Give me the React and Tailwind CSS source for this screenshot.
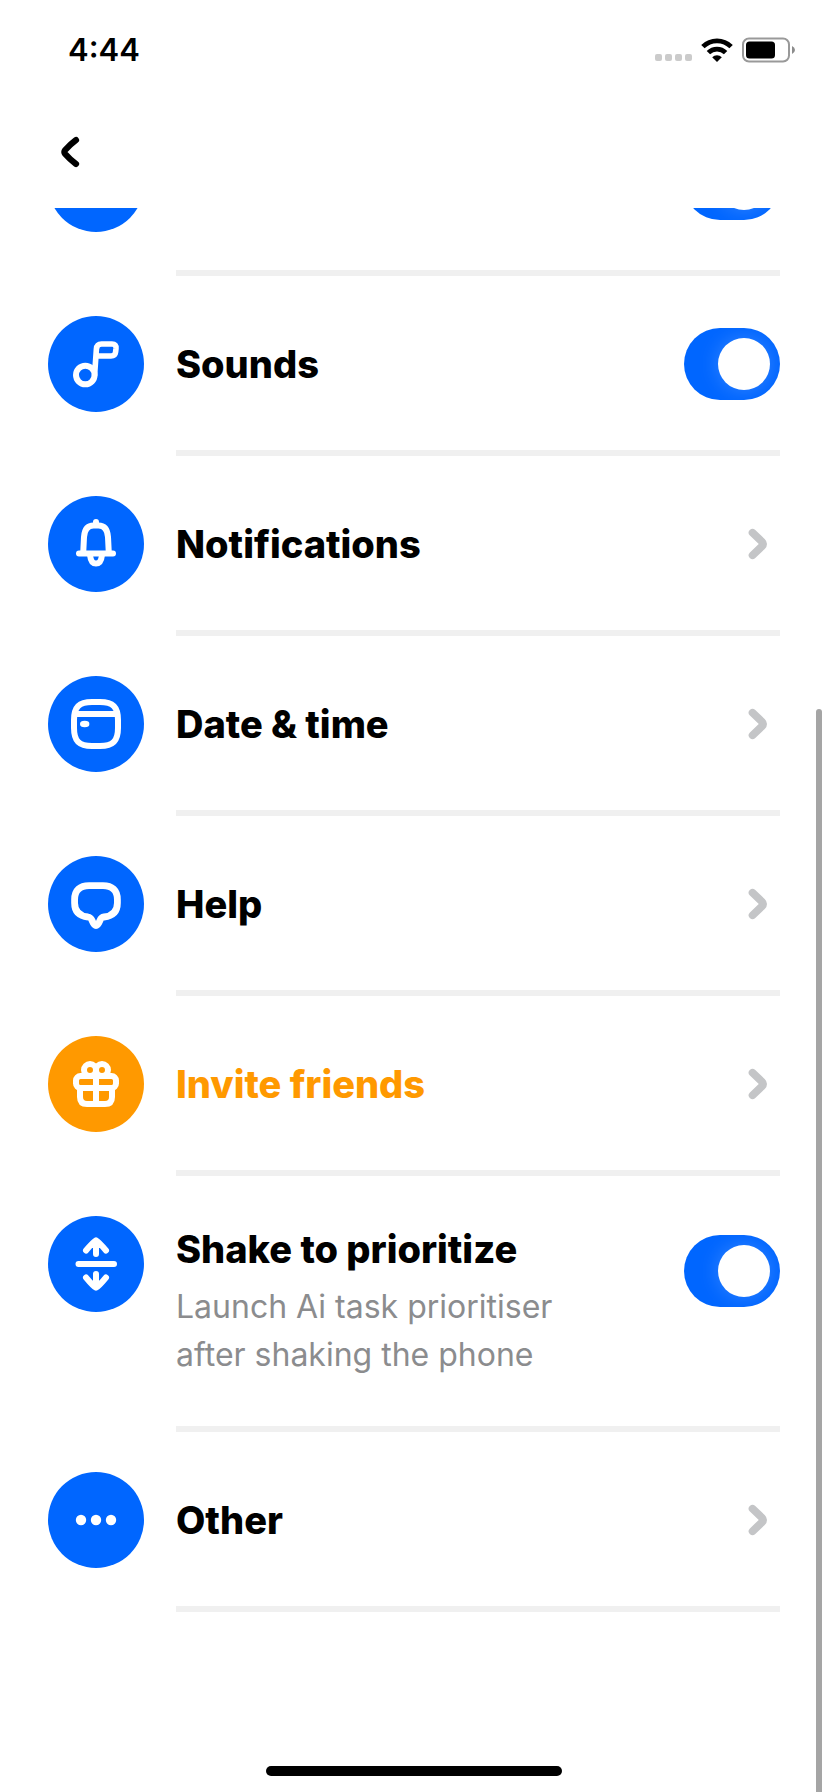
import { useState } from "react";

const Glyph = ({ children }) => (
    <svg viewBox="0 0 96 96" className="size-24" fill="none" stroke="white" strokeWidth="6" strokeLinecap="round" strokeLinejoin="round" aria-hidden="true">
        {children}
    </svg>
);

const icons = {
    music: (
        <Glyph>
            <circle cx="37.3" cy="59" r="9.3" />
            <path d="M46.6 59L48.4 33Q48.8 28 53.5 28H64Q68.4 28 68 32.5L67.6 36Q67.2 40 63 40H49" strokeWidth="5.6" />
        </Glyph>
    ),
    bell: (
        <Glyph>
            <path d="M48 26V29M31 57.6H65" />
            <path d="M35.2 57L36 41C36.6 33 40 29.6 45.5 29.6H50.5C56 29.6 59.4 33 60 41L60.8 57" />
            <path d="M42 59C42.6 65 44.6 67.6 48 67.6S53.4 65 54 59" />
        </Glyph>
    ),
    calendar: (
        <Glyph>
            <path d="M26 44C26 31 31 26 44 26H52C65 26 70 31 70 44V52C70 65 65 70 52 70H44C31 70 26 65 26 52Z" />
            <path d="M28 38H68" />
            <ellipse cx="36.7" cy="48" rx="4.7" ry="3.3" fill="white" stroke="none" />
        </Glyph>
    ),
    chat: (
        <Glyph>
            <path strokeWidth="6.8" d="M40 61C31 60 26.6 55 26.6 47V43.5C26.6 34 32 29.6 41 29.6H55C64 29.6 69.4 34 69.4 43.5V47C69.4 55 65 60 56 61C53.6 61.3 53 62 52 64.4C50.6 67.8 49.6 69.6 48 69.6S45.4 67.8 44 64.4C43 62 42.4 61.3 40 61Z" />
        </Glyph>
    ),
    gift: (
        <Glyph>
            <rect x="28" y="40" width="40" height="12" rx="4.5" />
            <path d="M32 52V61Q32 68 39 68H57Q64 68 64 61V52M48 40V68" />
            <circle cx="42" cy="34" r="6" />
            <circle cx="54" cy="34" r="6" />
        </Glyph>
    ),
    shake: (
        <Glyph>
            <path d="M30.5 48H66M48 26V38M38 34.5Q45 26 48 24.3Q51 26 58 34.5M48 58V70M38 61.5Q45 70 48 71.7Q51 70 58 61.5" />
        </Glyph>
    ),
    dots: (
        <Glyph>
            <g fill="white" stroke="none">
                <circle cx="33" cy="48" r="5.2" />
                <circle cx="48" cy="48" r="5.2" />
                <circle cx="63" cy="48" r="5.2" />
            </g>
        </Glyph>
    ),
};

const StatusBar = () => (
    <header className="flex h-[100px] items-center justify-between pl-[68px] pr-8">
        <time className="text-[31px] leading-10 font-semibold">4:44</time>
        <div className="flex items-center gap-[9px]">
            <div className="flex gap-[3px] pt-3.5">
                <i className="size-[7px] rounded-[2px] bg-[#cbcbcb]" />
                <i className="size-[7px] rounded-[2px] bg-[#cbcbcb]" />
                <i className="size-[7px] rounded-[2px] bg-[#cbcbcb]" />
                <i className="size-[7px] rounded-[2px] bg-[#cbcbcb]" />
            </div>
            <svg viewBox="0 0 32 24" className="h-6 w-8" aria-label="Wi-Fi">
                <g fill="none" stroke="black" strokeWidth="4.8">
                    <path d="M1.9 8.6A20 20 0 0 1 30.1 8.6" />
                    <path d="M7.4 14.6A12.2 12.2 0 0 1 24.6 14.6" />
                </g>
                <path d="M16 24L11.2 19.2A6.8 6.8 0 0 1 20.8 19.2Z" />
            </svg>
            <svg viewBox="0 0 54 26" className="h-[26px] w-[54px]" aria-label="Battery">
                <rect x="1" y="1.5" width="46" height="23" rx="6" fill="none" stroke="#999" strokeWidth="2" />
                <rect x="4" y="4.5" width="29" height="17" rx="3.5" />
                <path d="M50 9Q53 10.5 53 13T50 17Z" fill="#8c8c8c" />
            </svg>
        </div>
    </header>
);

const Switch = ({ label }) => {
    const [on, setOn] = useState(true);
    return (
        <input
            type="checkbox"
            role="switch"
            aria-label={label}
            checked={on}
            onChange={() => setOn(!on)}
            className="relative h-[72px] w-24 shrink-0 cursor-pointer appearance-none overflow-hidden rounded-full bg-gray-300 before:absolute before:top-[10px] before:left-[10px] before:size-[52px] before:rounded-full before:bg-white before:shadow-[0_0_20px_rgba(255,255,255,0.2)] checked:bg-[#0066ff] checked:before:left-[34px]"
        />
    );
};

const Chevron = () => (
    <svg viewBox="0 0 24 36" className="mr-2 h-9 w-6 shrink-0" fill="none" stroke="#c4c5c7" strokeWidth="7.8" strokeLinecap="round" strokeLinejoin="round" aria-hidden="true">
        <path d="M4.6 6.8L14 15.8Q16.2 18 14 20.2L4.6 29.2" />
    </svg>
);

const Row = ({ icon, title, label, text, toggle, accent }) => {
    const Body = toggle ? "div" : "a";
    return (
        <li>
            <Body href={toggle ? undefined : "#"} className="flex gap-8 pt-10">
                <span className={accent ? "size-24 shrink-0 rounded-full bg-[#ff9900]" : "size-24 shrink-0 rounded-full bg-[#0066ff]"}>
                    {icons[icon]}
                </span>
                <div className="flex flex-1 items-start justify-between border-b-[6px] border-[#f0f0f0] pb-[38px]">
                    {text ? (
                        <div className="flex min-h-[172px] max-w-[400px] flex-col gap-[10px] pt-[9px]">
                            <h2 className="text-[38px] leading-[48px] font-extrabold">{title}</h2>
                            <p className="text-[32px] leading-[48px] text-[#8b8c8e]">{text}</p>
                        </div>
                    ) : (
                        <h2 className={accent ? "text-[38px] leading-[96px] font-extrabold text-[#ff9900]" : "text-[38px] leading-[96px] font-extrabold"}>{title}</h2>
                    )}
                    <div className={text ? "flex h-[110px] items-center" : "flex h-24 items-center"}>
                        {toggle ? <Switch label={title || label} /> : <Chevron />}
                    </div>
                </div>
            </Body>
        </li>
    );
};

export default function App() {
    return (
        <div className="flex h-screen flex-col overflow-hidden bg-white font-['Inter',sans-serif] text-black">
            <StatusBar />
            <nav className="flex h-[108px] shrink-0 items-center px-12 pb-1">
                <button type="button" aria-label="Back" className="flex size-11 cursor-pointer items-center justify-center">
                    <svg viewBox="0 0 24 36" className="h-9 w-6" fill="none" stroke="black" strokeWidth="6.2" strokeLinecap="round" strokeLinejoin="round">
                        <path d="M18 6Q12 10.5 7.2 16Q5.6 18 7.2 20Q12 25.5 18 30" />
                    </svg>
                </button>
            </nav>

            <main className="relative flex-1 overflow-hidden">
                {/* list is scrolled part-way past its first row */}
                <ul className="-mt-28 px-12">
                    <Row label="Haptics" toggle />
                    <Row icon="music" title="Sounds" toggle />
                    <Row icon="bell" title="Notifications" />
                    <Row icon="calendar" title="Date & time" />
                    <Row icon="chat" title="Help" />
                    <Row icon="gift" title="Invite friends" accent />
                    <Row icon="shake" title="Shake to prioritize" text="Launch Ai task prioritiser after shaking the phone" toggle />
                    <Row icon="dots" title="Other" />
                </ul>
                <div className="absolute top-[501px] right-[6px] bottom-0 w-[6px] rounded-t-full bg-[#a5a5a5]" />
                <div className="absolute inset-x-0 bottom-4 flex justify-center">
                    <div className="h-[10px] w-[296px] rounded-full bg-black" />
                </div>
            </main>
        </div>
    );
}
